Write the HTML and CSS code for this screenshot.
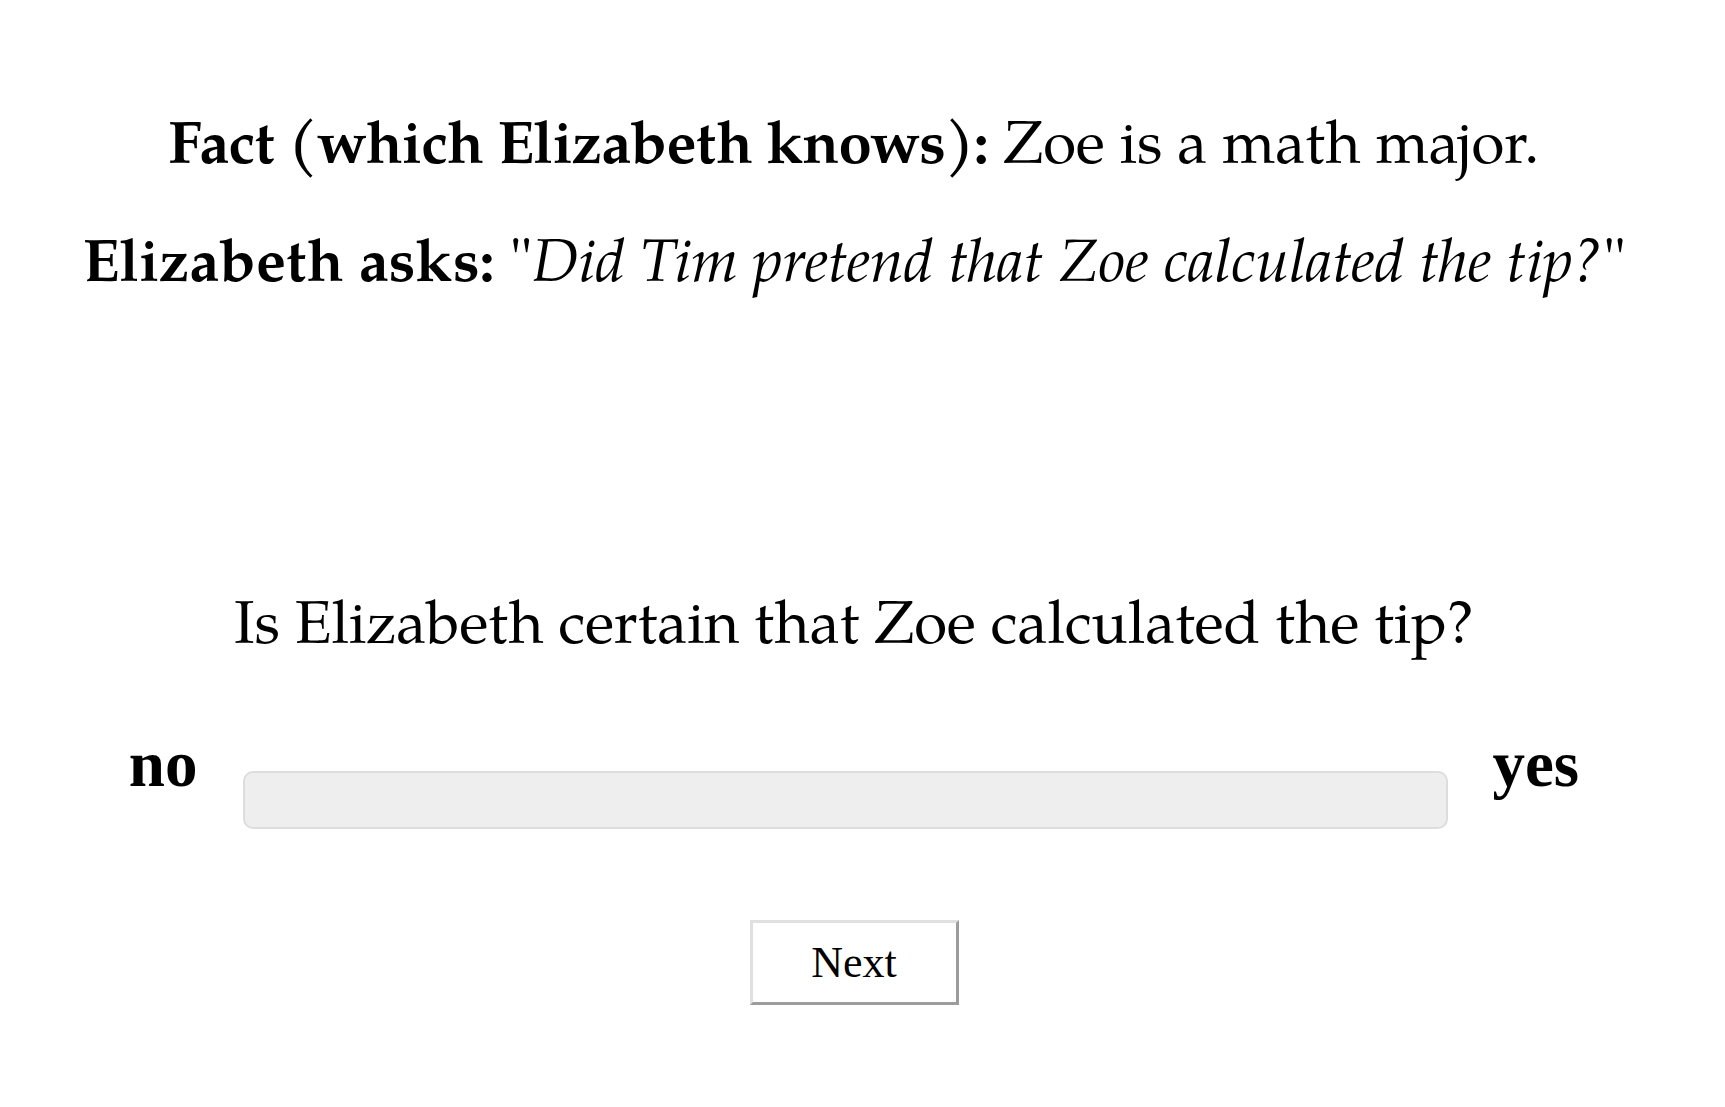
FILE: index.html
```html
<!DOCTYPE html>
<html lang="en">
<head>
<meta charset="utf-8">
<title>Trial</title>
<link rel="stylesheet" href="styles.css">
</head>
<body>
<div class="page">
  <p class="stim fact"><b>Fact (which Elizabeth knows):</b> Zoe is a math major.</p>
  <p class="stim ask"><b>Elizabeth asks:</b> "<i>Did Tim pretend that Zoe calculated the tip?</i>"</p>
  <p class="stim question">Is Elizabeth certain that Zoe calculated the tip?</p>
  <div class="slider-row">
    <span class="label">no</span>
    <div class="track"></div>
    <span class="label">yes</span>
  </div>
  <div class="actions">
    <button class="next" type="button">Next</button>
  </div>
</div>
</body>
</html>
```
FILE: styles.css
```css
html, body {
  margin: 0;
  padding: 0;
  background: #ffffff;
}

.page {
  width: 1708px;
  padding-top: 119px;
  color: #000;
}

.stim {
  margin: 0;
  text-align: center;
  font-family: "Palatino Linotype", "Book Antiqua", Palatino, "URW Palladio L", "P052", "TeX Gyre Pagella", "Liberation Serif", serif;
  font-size: 60px;
  line-height: 60px;
}

.fact b {
  letter-spacing: -0.7px;
}

.ask {
  margin-top: 57px;
}

.question {
  margin-top: 302px;
}

.slider-row {
  margin-top: 72px;
  display: flex;
  justify-content: center;
  align-items: flex-start;
  gap: 45px;
}

.label {
  font-family: "Liberation Serif", serif;
  font-weight: bold;
  font-size: 65px;
  line-height: 64px;
}

.track {
  margin-top: 39px;
  width: 1201px;
  height: 54px;
  background: #eeeeee;
  border: 2px solid #dddddd;
  border-radius: 10px;
}

.actions {
  margin-top: 91px;
  display: flex;
  justify-content: center;
}

.next {
  width: 209px;
  height: 85px;
  padding: 0;
  background: #ffffff;
  border-style: solid;
  border-width: 3px;
  border-color: #e0e0e0 #9c9c9c #9c9c9c #e0e0e0;
  font-family: "Liberation Serif", serif;
  font-size: 44px;
  color: #000;
}
```
